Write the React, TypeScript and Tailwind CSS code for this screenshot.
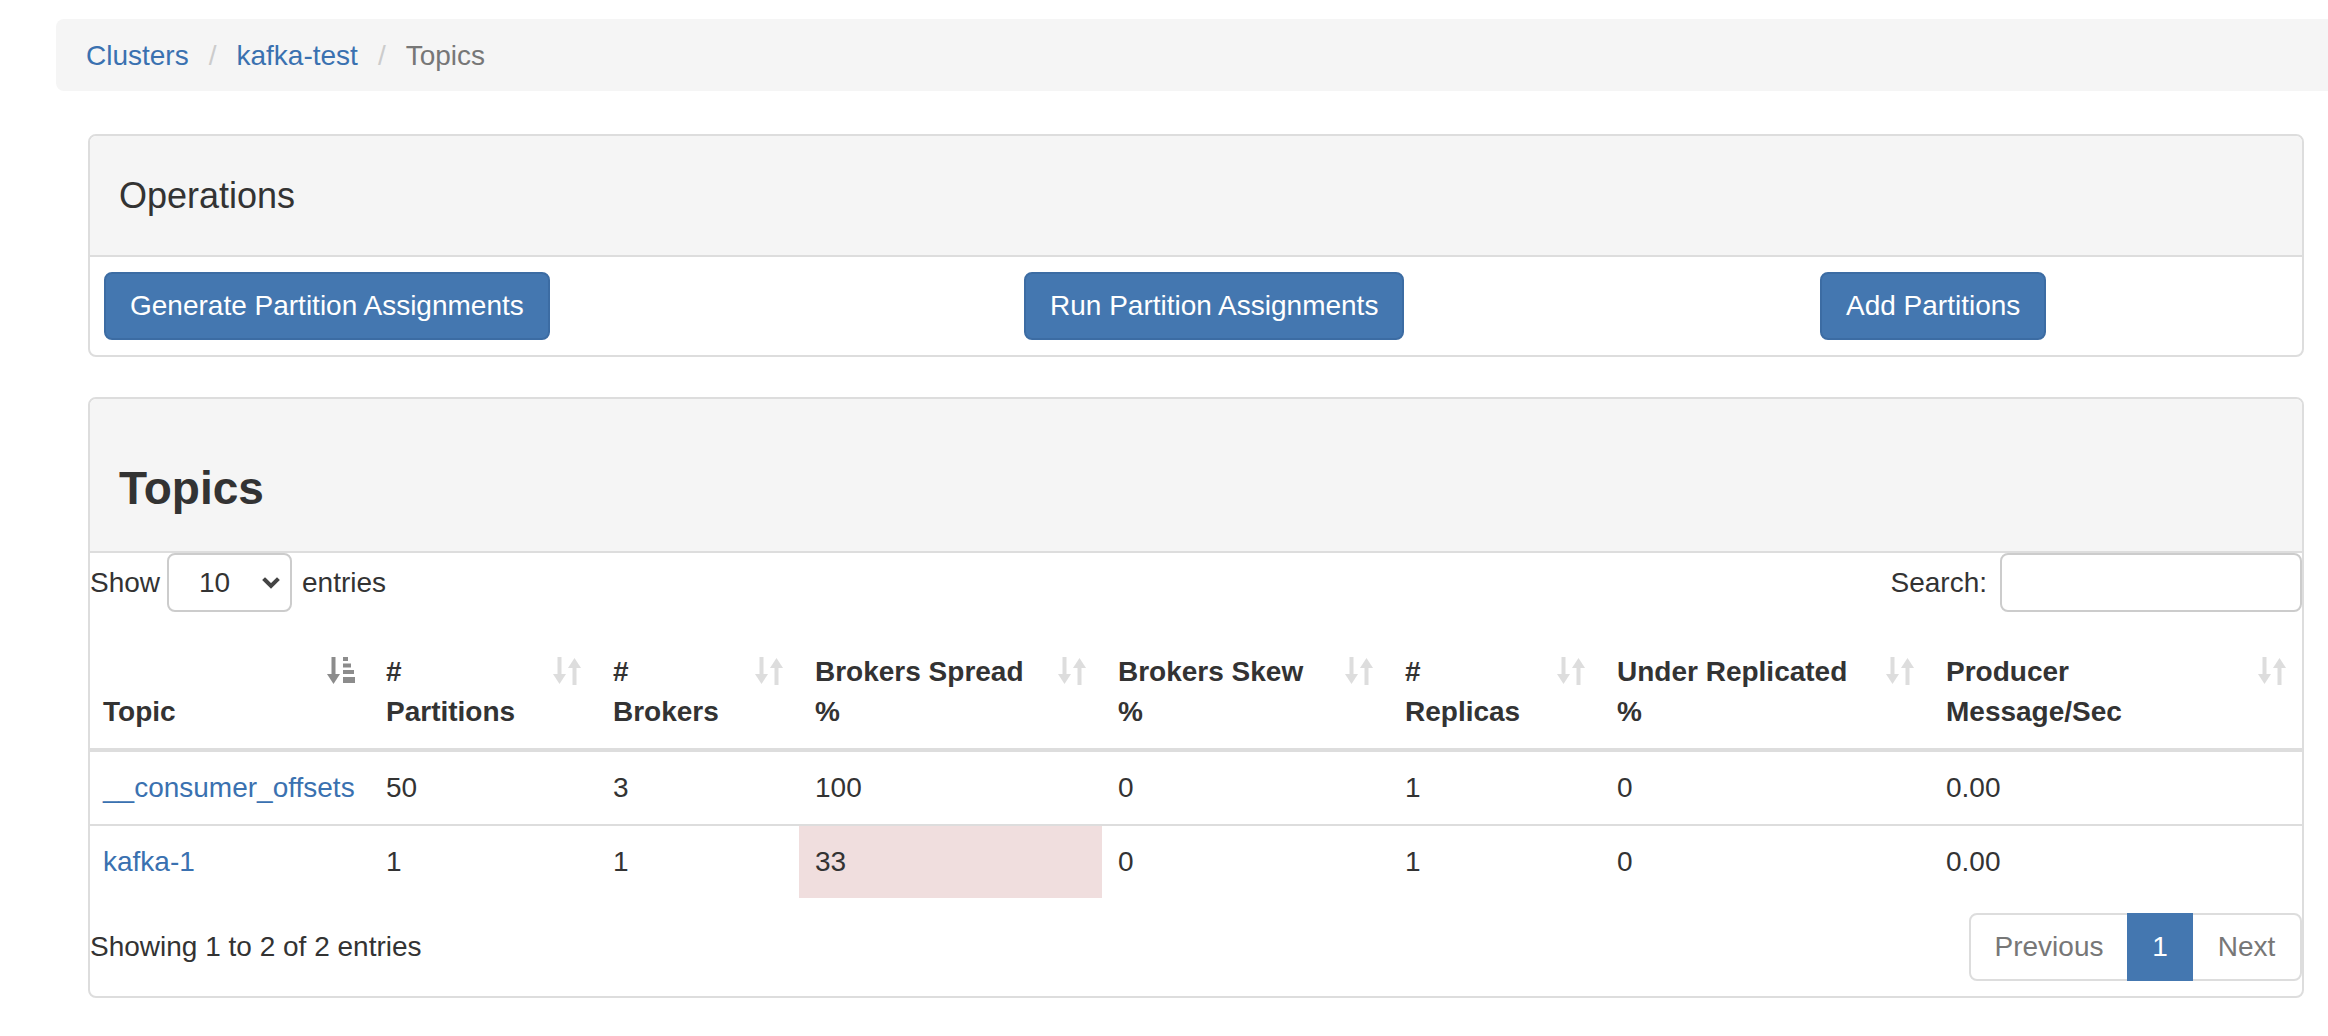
import React from "react";

const columns = [
  { lines: ["Topic"], width: "w-[280px]", sorted: true },
  { lines: ["#", "Partitions"], width: "w-[227px]" },
  { lines: ["#", "Brokers"], width: "w-[202px]" },
  { lines: ["Brokers Spread", "%"], width: "w-[303px]" },
  { lines: ["Brokers Skew", "%"], width: "w-[287px]" },
  { lines: ["#", "Replicas"], width: "w-[212px]" },
  { lines: ["Under Replicated", "%"], width: "w-[329px]" },
  { lines: ["Producer", "Message/Sec"], width: "w-[372px]" },
];

const rows = [
  { topic: "__consumer_offsets", partitions: "50", brokers: "3", spread: "100", skew: "0", replicas: "1", under: "0", rate: "0.00", warn: false },
  { topic: "kafka-1", partitions: "1", brokers: "1", spread: "33", skew: "0", replicas: "1", under: "0", rate: "0.00", warn: true },
];

function SortIcon() {
  return (
    <svg width="28" height="28" viewBox="0 0 28 28" fill="#dddddd">
      <rect x="4.5" y="0" width="4" height="19" />
      <polygon points="0,17 13,17 6.5,27" />
      <rect x="19.5" y="9" width="4" height="19" />
      <polygon points="15,11 28,11 21.5,1" />
    </svg>
  );
}

function SortAscIcon() {
  return (
    <svg width="28" height="28" viewBox="0 0 28 28" fill="#8c8c8c">
      <rect x="4.5" y="0" width="4" height="19" />
      <polygon points="0,17 13,17 6.5,27" />
      <rect x="16" y="0" width="5" height="4" />
      <rect x="16" y="6.5" width="8" height="4" />
      <rect x="16" y="13" width="11" height="4" />
      <rect x="16" y="20" width="13" height="6" />
    </svg>
  );
}

function PanelHeading({ children, big }: { children: React.ReactNode; big?: boolean }) {
  return (
    <div
      className={
        big
          ? "h-[154px] pt-[25px] px-[29px] flex items-center bg-[#f5f5f5] border-b-2 border-[#dddddd] rounded-t-[6px]"
          : "h-[121px] px-[29px] flex items-center bg-[#f5f5f5] border-b-2 border-[#dddddd] rounded-t-[6px]"
      }
    >
      {children}
    </div>
  );
}

export default function App() {
  return (
    <div className="min-h-screen bg-white text-[#333333] text-[28px] leading-[40px] font-['Liberation_Sans',Arial,sans-serif] pt-[19px]">
      {/* breadcrumb */}
      <div className="ml-[56px] h-[72px] pt-[2px] px-[30px] flex items-center bg-[#f5f5f5] rounded-l-[8px]">
        <span className="text-[#3a71b0]">Clusters</span>
        <span className="px-[20px] text-[#cccccc]">/</span>
        <span className="text-[#3a71b0]">kafka-test</span>
        <span className="px-[20px] text-[#cccccc]">/</span>
        <span className="text-[#777777]">Topics</span>
      </div>

      <div className="pl-[88px] pr-[24px]">
        {/* operations */}
        <div className="mt-[43px] border-2 border-[#dddddd] rounded-[8px]">
          <PanelHeading>
            <h3 className="text-[36px] leading-[40px] font-normal">Operations</h3>
          </PanelHeading>
          <div className="py-[15px] pl-[14px] grid grid-cols-[920px_796px_1fr]">
            <div>
              <button className="h-[68px] px-[24px] bg-[#4477b0] border-2 border-[#3c6ca3] rounded-[8px] text-white">
                Generate Partition Assignments
              </button>
            </div>
            <div>
              <button className="h-[68px] px-[24px] bg-[#4477b0] border-2 border-[#3c6ca3] rounded-[8px] text-white">
                Run Partition Assignments
              </button>
            </div>
            <div>
              <button className="h-[68px] px-[24px] bg-[#4477b0] border-2 border-[#3c6ca3] rounded-[8px] text-white">
                Add Partitions
              </button>
            </div>
          </div>
        </div>

        {/* topics */}
        <div className="mt-[40px] border-2 border-[#dddddd] rounded-[8px]">
          <PanelHeading big>
            <h2 className="text-[46px] leading-[52px] font-bold">Topics</h2>
          </PanelHeading>

          <div className="flex items-center justify-between">
            <div className="flex items-center">
              <span>Show</span>
              <div className="ml-[7px] mr-[10px] w-[125px] h-[59px] border-2 border-[#cccccc] rounded-[8px] flex items-center justify-between pl-[30px] pr-[10px]">
                <span>10</span>
                <svg width="18" height="12" viewBox="0 0 18 12" fill="none" stroke="#444444" strokeWidth="4" strokeLinecap="square">
                  <polyline points="3,3 9,9 15,3" />
                </svg>
              </div>
              <span>entries</span>
            </div>
            <div className="flex items-center">
              <span>Search:</span>
              <div className="ml-[13px] w-[302px] h-[59px] border-2 border-[#cccccc] rounded-[8px]" />
            </div>
          </div>

          <table className="mt-[24px] w-full table-fixed border-collapse">
            <colgroup>
              {columns.map((c, i) => (
                <col key={i} className={c.width} />
              ))}
            </colgroup>
            <thead>
              <tr className="border-b-4 border-[#dddddd]">
                {columns.map((c, i) => (
                  <th key={i} className={i === 0 ? "relative py-[16px] pl-[13px] pr-[60px] text-left align-bottom font-bold" : "relative p-[16px] pr-[60px] text-left align-bottom font-bold"}>
                    {c.lines.map((l, j) => (
                      <div key={j} className="whitespace-nowrap">{l}</div>
                    ))}
                    <span className={c.sorted ? "absolute top-[21px] right-[15px]" : "absolute top-[21px] right-[16px]"}>
                      {c.sorted ? <SortAscIcon /> : <SortIcon />}
                    </span>
                  </th>
                ))}
              </tr>
            </thead>
            <tbody>
              {rows.map((r, i) => (
                <tr key={i} className={i > 0 ? "border-t-2 border-[#dddddd]" : ""}>
                  <td className="py-[16px] pl-[13px] pr-[16px] text-[#3a71b0] whitespace-nowrap">{r.topic}</td>
                  <td className="p-[16px]">{r.partitions}</td>
                  <td className="p-[16px]">{r.brokers}</td>
                  <td className={r.warn ? "p-[16px] bg-[#f0dede]" : "p-[16px]"}>{r.spread}</td>
                  <td className="p-[16px]">{r.skew}</td>
                  <td className="p-[16px]">{r.replicas}</td>
                  <td className="p-[16px]">{r.under}</td>
                  <td className="p-[16px]">{r.rate}</td>
                </tr>
              ))}
            </tbody>
          </table>

          <div className="mt-[15px] mb-[15px] flex items-center justify-between">
            <span>Showing 1 to 2 of 2 entries</span>
            <div className="flex h-[68px] border-2 border-[#dddddd] rounded-[8px] text-[#777777]">
              <div className="w-[156px] flex items-center justify-center">Previous</div>
              <div className="w-[66px] -my-[2px] flex items-center justify-center bg-[#4477b0] text-white">1</div>
              <div className="w-[107px] flex items-center justify-center">Next</div>
            </div>
          </div>
        </div>
      </div>
    </div>
  );
}
